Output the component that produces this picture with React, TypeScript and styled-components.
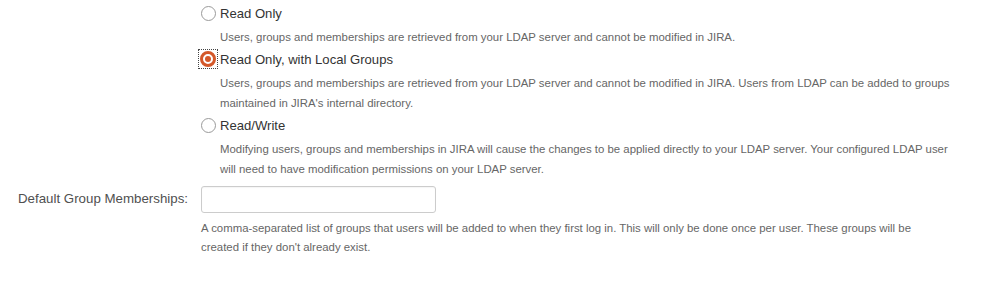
import React from "react";
import styled, { createGlobalStyle } from "styled-components";

const Global = createGlobalStyle`
  html, body { margin: 0; padding: 0; background: #fff; }
  body { font-family: "Liberation Sans", Arial, sans-serif; color: #333; }
`;

const Form = styled.div`
  display: grid;
  grid-template-columns: 188px 754px;
  column-gap: 13px;
  padding-top: 3px;
  width: 999px;
`;

const Label = styled.label<{ $top?: number }>`
  text-align: right;
  font-size: 13.3px;
  color: #505050;
  padding-top: ${(p) => p.$top ?? 0}px;
`;

const Options = styled.div`
  display: flex;
  flex-direction: column;
`;

const Option = styled.div`
  display: flex;
  flex-direction: column;
`;

const RadioRow = styled.label`
  display: flex;
  align-items: center;
  gap: 2px;
  font-size: 13.1px;
  color: #333;
  height: 20px;
`;

const RadioWrap = styled.span<{ $focus?: boolean }>`
  display: inline-flex;
  align-items: center;
  justify-content: center;
  width: 20px;
  height: 20px;
  margin-left: -3px;
  outline: ${(p) => (p.$focus ? "1px dotted #444" : "none")};
  outline-offset: -1px;
`;

const Circle = styled.span<{ $checked?: boolean }>`
  box-sizing: border-box;
  width: ${(p) => (p.$checked ? 16 : 15)}px;
  height: ${(p) => (p.$checked ? 16 : 15)}px;
  border-radius: 50%;
  border: ${(p) => (p.$checked ? "3px solid #d4582a" : "1px solid #9a9a9a")};
  background: #fff;
  display: inline-flex;
  align-items: center;
  justify-content: center;
  &::after {
    content: "";
    display: ${(p) => (p.$checked ? "block" : "none")};
    width: 6px;
    height: 6px;
    border-radius: 50%;
    background: #d4582a;
  }
`;

const Desc = styled.div<{ $indent?: number; $lh?: number; $top?: number; $max?: number }>`
  font-size: 11.4px;
  line-height: ${(p) => p.$lh ?? 20}px;
  color: #666;
  padding-left: ${(p) => p.$indent ?? 19}px;
  padding-top: ${(p) => p.$top ?? 4}px;
  padding-bottom: 2px;
  max-width: ${(p) => (p.$max ? `${p.$max}px` : "none")};
`;

const Input = styled.input`
  box-sizing: border-box;
  width: 235px;
  height: 27px;
  border: 1px solid #ccc;
  border-radius: 3px;
  font-family: inherit;
  font-size: 14px;
  padding: 3px 6px;
  box-shadow: inset 0 1px 1px rgba(0,0,0,0.04);
`;

const Field = styled.div`
  display: flex;
  flex-direction: column;
  padding-top: 5px;
`;

const options = [
  {
    label: "Read Only",
    desc: "Users, groups and memberships are retrieved from your LDAP server and cannot be modified in JIRA.",
  },
  {
    label: "Read Only, with Local Groups",
    desc: "Users, groups and memberships are retrieved from your LDAP server and cannot be modified in JIRA. Users from LDAP can be added to groups maintained in JIRA's internal directory.",
    checked: true,
  },
  {
    label: "Read/Write",
    desc: "Modifying users, groups and memberships in JIRA will cause the changes to be applied directly to your LDAP server. Your configured LDAP user will need to have modification permissions on your LDAP server.",
  },
];

export default function App() {
  return (
    <>
      <Global />
      <Form>
        <div />
        <Options>
          {options.map((o) => (
            <Option key={o.label}>
              <RadioRow>
                <RadioWrap $focus={o.checked}>
                  <Circle $checked={o.checked} />
                </RadioWrap>
                {o.label}
              </RadioRow>
              <Desc>{o.desc}</Desc>
            </Option>
          ))}
        </Options>
        <Label $top={10}>Default Group Memberships:</Label>
        <Field>
          <Input type="text" />
          <Desc $indent={0} $lh={19} $top={6} $max={730}>
            A comma-separated list of groups that users will be added to when they first log in. This will only be done once per user. These groups will be created if they don't already exist.
          </Desc>
        </Field>
      </Form>
    </>
  );
}
